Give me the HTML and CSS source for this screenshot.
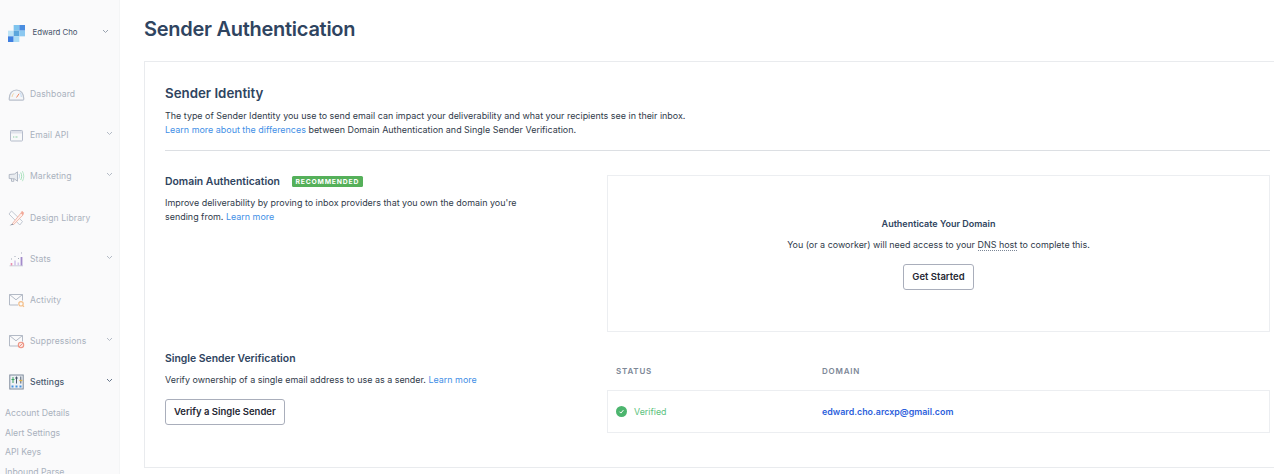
FILE: index.html
```html
<!DOCTYPE html>
<html lang="en">
<head>
<meta charset="utf-8">
<title>Sender Authentication</title>
<link rel="stylesheet" href="styles.css">
</head>
<body>
<div class="app">
  <aside class="sidebar">
    <div class="account">
      <svg class="logo" width="17" height="17" viewBox="0 0 16.500 16.500"><rect x="5.500" y="0" width="5.500" height="5.500" fill="#7fc4ee"/><rect x="11" y="0" width="5.500" height="5.500" fill="#4a8de0"/><rect x="0" y="5.500" width="5.500" height="5.500" fill="#bce3f6"/><rect x="5.500" y="5.500" width="5.500" height="5.500" fill="#5ba6dc"/><rect x="11" y="5.500" width="5.500" height="5.500" fill="#8cc8f0"/><rect x="0" y="11" width="5.500" height="5.500" fill="#3f7fe0"/><rect x="5.500" y="11" width="5.500" height="5.500" fill="#aadcf5"/></svg>
      <span class="account-name">Edward Cho</span>
      <svg class="chev acct-chev" width="7" height="5" viewBox="0 0 7 5"><path d="M1 1l2.500 2.500L6 1" fill="none" stroke="#9aa3b0" stroke-width="1"/></svg>
    </div>
    <nav class="nav">
      <a class="nav-item"><svg class="ico" width="18" height="18" viewBox="0 0 18 18" fill="none"><path d="M1.200 14c0-5.500 3-9 7.300-9s7.300 3.500 7.300 9c0 .8-.4 1.200-1 1.200H2.200c-.6 0-1-.4-1-1.200z" fill="#f6f7f9" stroke="#b9c0cc" stroke-width="1.200"/><path d="M8.500 12.500l2.600-3.800" stroke="#ef8a62"/><path d="M4 12c.2-1.500.8-2.700 1.700-3.600" stroke="#f3d6a8"/><path d="M12 7.500c.8.900 1.200 2.600 1.300 4.500" stroke="#bcd5f0"/></svg><span>Dashboard</span></a>
      <a class="nav-item"><svg class="ico" width="18" height="18" viewBox="0 0 18 18" fill="none"><rect x="2.500" y="4.500" width="12" height="10.500" rx=".8" fill="#f8f9fa" stroke="#b5bccb"/><rect x="3" y="5" width="11" height="2.500" fill="#dfe2ea"/><path d="M5 11h1.300M7.500 11h2" stroke="#8fd0a6"/></svg><span>Email API</span><svg class="chev" width="7" height="5" viewBox="0 0 7 5"><path d="M1 1l2.500 2.500L6 1" fill="none" stroke="#b4bbc6"/></svg></a>
      <a class="nav-item"><svg class="ico" width="18" height="18" viewBox="0 0 18 18" fill="none"><path d="M1.200 7.500l5.300-.5 3-2.200v9.400l-3-2.200-5.300-.5z" fill="#e9ecf0" stroke="#aab2bf" stroke-width=".9"/><path d="M3.500 11.500v2.800h2.300v-2.600" stroke="#aab2bf" stroke-width=".9"/><path d="M11 7c.7 1.300.7 3.200 0 4.500" stroke="#c0d8ea"/><path d="M12.700 5.500c1.300 2.300 1.300 5.200 0 7.500" stroke="#a3dfb8"/><path d="M14.400 4.200c1.800 3 1.800 7 0 10" stroke="#b7e6c8"/></svg><span>Marketing</span><svg class="chev" width="7" height="5" viewBox="0 0 7 5"><path d="M1 1l2.500 2.500L6 1" fill="none" stroke="#b4bbc6"/></svg></a>
      <a class="nav-item"><svg class="ico" width="18" height="18" viewBox="0 0 18 18" fill="none"><path d="M3.500 2l11 10.500-2.700 3.500L1 5z" fill="#fbfbfc" stroke="#c3c9d3"/><path d="M4.500 14.500l8.500-10.500 2 2L5.500 15.700z" fill="#fdeeea" stroke="#f2b3a4" stroke-width=".9"/><path d="M13 4l1-1.800 1.700 1.500L15 6" fill="#f2a797" stroke="#f2a797" stroke-width=".6"/><path d="M1.500 16.500l3-2 1 1.200z" fill="#8c96a5"/></svg><span>Design Library</span></a>
      <a class="nav-item"><svg class="ico" width="18" height="18" viewBox="0 0 18 18" fill="none"><path d="M1.500 15.800h13.500" stroke="#c9cfd8"/><path d="M3.500 15.500v-2.500" stroke="#ea8fb0" stroke-width="1.600"/><path d="M7 15.500v-5M10.300 15.500v-3" stroke="#d4c6ec" stroke-width="1.600"/><path d="M13.500 15.500V7" stroke="#a28acb" stroke-width="1.800"/><path d="M3 9h1M6.500 6.500h1M10 8.500h1M13 3h1" stroke="#a0a9b7"/></svg><span>Stats</span><svg class="chev" width="7" height="5" viewBox="0 0 7 5"><path d="M1 1l2.500 2.500L6 1" fill="none" stroke="#b4bbc6"/></svg></a>
      <a class="nav-item"><svg class="ico" width="18" height="18" viewBox="0 0 18 18" fill="none"><path d="M10 14H1.500V3.500h13v6" stroke="#b3bac6"/><path d="M1.500 3.500L8 8.800l6.500-5.300" stroke="#b3bac6"/><circle cx="13" cy="12.800" r="2.200" stroke="#f3bf8a" stroke-width="1.200"/><path d="M14.600 14.400l1.400 1.500" stroke="#f3bf8a" stroke-width="1.200"/></svg><span>Activity</span></a>
      <a class="nav-item"><svg class="ico" width="18" height="18" viewBox="0 0 18 18" fill="none"><path d="M10 14H1.500V3.500h13v6" stroke="#b3bac6"/><path d="M1.500 3.500L8 8.800l6.500-5.300" stroke="#b3bac6"/><circle cx="13" cy="13" r="2.700" fill="#fbe6e1" stroke="#ee9484" stroke-width="1.100"/><path d="M11.200 14.800l3.600-3.600" stroke="#ee9484"/></svg><span>Suppressions</span><svg class="chev" width="7" height="5" viewBox="0 0 7 5"><path d="M1 1l2.500 2.500L6 1" fill="none" stroke="#b4bbc6"/></svg></a>
      <a class="nav-item active"><svg class="ico" width="18" height="18" viewBox="0 0 18 18" fill="none"><rect x="1.800" y="2" width="13.400" height="14" fill="#eef1f5" stroke="#7d8a9c"/><path d="M3.500 6.500h3M5 4v6" stroke="#3fa565"/><path d="M8.500 3.500v7" stroke="#4a5a70"/><path d="M7.200 5h2.600" stroke="#3a4a60"/><path d="M12.800 3.500v7" stroke="#4a5a70"/><path d="M11.300 7.500h3" stroke="#e3b341" stroke-width="1.300"/><path d="M3.500 13.500h2M7.500 13.500h2M11.500 13.500h2" stroke="#3f8fe0" stroke-width="1.800"/></svg><span>Settings</span><svg class="chev" width="7" height="5" viewBox="0 0 7 5"><path d="M1 1l2.500 2.500L6 1" fill="none" stroke="#66758a"/></svg></a>
    </nav>
    <ul class="subnav">
      <li>Account Details</li>
      <li>Alert Settings</li>
      <li>API Keys</li>
      <li>Inbound Parse</li>
    </ul>
  </aside>
  <main class="main">
    <h1 class="page-title">Sender Authentication</h1>
    <section class="card">
      <h2 class="card-title">Sender Identity</h2>
      <p class="text intro">The type of Sender Identity you use to send email can impact your deliverability and what your recipients see in their inbox.<br><a class="link">Learn more about the differences</a> between Domain Authentication and Single Sender Verification.</p>
      <hr class="rule">
      <div class="rows">
        <div class="col-left">
          <h3 class="section-title">Domain Authentication <span class="badge">RECOMMENDED</span></h3>
          <p class="text desc">Improve deliverability by proving to inbox providers that you own the domain you're<br>sending from. <a class="link">Learn more</a></p>
        </div>
        <div class="auth-box">
          <h4 class="auth-title">Authenticate Your Domain</h4>
          <p class="text auth-text">You (or a coworker) will need access to your <span class="dotted">DNS host</span> to complete this.</p>
          <button class="btn">Get Started</button>
        </div>
        <div class="col-left">
          <h3 class="section-title">Single Sender Verification</h3>
          <p class="text desc">Verify ownership of a single email address to use as a sender. <a class="link">Learn more</a></p>
          <button class="btn btn-verify">Verify a Single Sender</button>
        </div>
        <div class="senders">
          <div class="table-head"><span class="col-status">STATUS</span><span>DOMAIN</span></div>
          <div class="table-row">
            <span class="col-status verified"><svg width="11" height="11" viewBox="0 0 11 11"><circle cx="5.500" cy="5.500" r="5.500" fill="#4cb56e"/><path d="M3.500 5.700l1.400 1.400 2.500-3" fill="none" stroke="#fff" stroke-width="1"/></svg>Verified</span>
            <a class="email">edward.cho.arcxp@gmail.com</a>
          </div>
        </div>
      </div>
    </section>
  </main>
</div>
</body>
</html>
```

FILE: styles.css
```css
* { box-sizing: border-box; }
html, body { margin: 0; height: 100%; overflow: hidden; background: #fff; }
body { font-family: Inter, "Noto Sans", sans-serif; color: #2f3a4a; }
h1, h2, h3, h4, p, ul { margin: 0; padding: 0; }

.app { display: flex; height: 474px; overflow: hidden; }

.sidebar { flex: 0 0 120px; width: 120px; background: #fafafb; border-right: 1px solid #f4f5f6; padding-top: 25px; }
.account { display: flex; align-items: center; padding-left: 8px; height: 17px; }
.account-name { margin: 0 0 4px 7.500px; font-size: 7.800px; font-weight: 400; color: #46536a; }
.acct-chev { margin: 0 10px 4px auto; }

.nav { margin-top: 31.500px; }
.nav-item { display: flex; align-items: center; height: 41.200px; padding-left: 8px; font-size: 8.600px; color: #a9b1bd; letter-spacing: .1px; }
.nav-item .ico { flex: none; margin-right: 4px; }
.nav-item .chev { margin-left: auto; margin-right: 6px; margin-top: -3px; }
.nav-item.active { color: #4a5a70; font-weight: 500; }

.subnav { list-style: none; padding-left: 5px; margin-top: 1px; font-size: 8.700px; color: #a9b1bd; }
.subnav li { height: 19.500px; line-height: 19.500px; }

.main { flex: 1; min-width: 0; padding: 0 0 0 24px; }
.page-title { font-size: 20px; font-weight: 600; letter-spacing: -.27px; line-height: 28px; margin-top: 15px; color: #2f4460; }

.card { width: 1140px; height: 407px; margin-top: 18px; padding: 22px 0 0 20px; border: 1px solid #e9ebee; border-right: 0; }
.card-title { font-size: 13.300px; font-weight: 600; line-height: 18px; color: #2f4460; }

.text { font-size: 8.950px; line-height: 13.500px; color: #2f3a4a; }
.intro { margin-top: 7px; }
.link { color: #3f8fe6; }
.rule { width: 1105px; height: 1px; margin: 14px 0 0; border: 0; background: #dcdfe3; }

.rows { display: grid; grid-template-columns: 442px 663px; grid-template-rows: 157px auto; margin-top: 24px; }
.section-title { font-size: 10.400px; font-weight: 600; line-height: 13px; color: #2f4460; }
.badge { display: inline-block; margin-left: 9px; padding: 0 4px; height: 11px; line-height: 11px; border-radius: 1.500px; background: #55b05a; color: #fff; font-size: 6.800px; font-weight: 700; letter-spacing: .8px; vertical-align: 1px; }
.desc { margin-top: 8px; }

.auth-box { display: flex; flex-direction: column; align-items: center; padding-top: 41px; border: 1px solid #eceef1; }
.auth-title { font-size: 9px; font-weight: 600; line-height: 13px; color: #2f4460; }
.auth-text { margin-top: 8px; }
.dotted { border-bottom: 1px dotted #7b8696; }

.btn { display: block; height: 26px; padding: 0 8.500px; border: 1px solid #a9aebb; border-radius: 3px; background: #fff; font-family: inherit; font-size: 9.500px; font-weight: 600; color: #1f2733; }
.auth-box .btn { margin-top: 12px; }
.btn-verify { margin-top: 12px; padding: 0 8px; }

.col-left:nth-child(3) { padding-top: 20px; }
.senders { padding-top: 34px; }
.table-head { display: flex; height: 24px; padding-left: 9px; font-size: 8px; font-weight: 600; letter-spacing: .8px; color: #7d8797; }
.col-status { width: 206px; flex: none; }
.table-row { display: flex; align-items: center; height: 43px; padding-left: 8px; border: 1px solid #eceef1; font-size: 8.900px; }
.verified { display: flex; align-items: center; gap: 7px; color: #5cc27e; }
.email { color: #2d5fdc; font-weight: 600; }
```
